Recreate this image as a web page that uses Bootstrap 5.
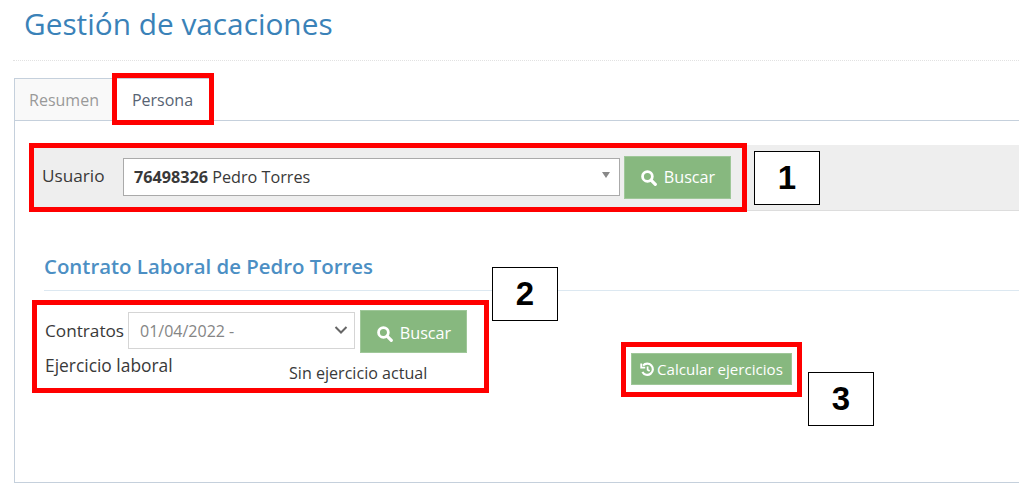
<!DOCTYPE html>
<html lang="es">
<head>
    <meta charset="UTF-8">
    <meta name="viewport" content="width=device-width, initial-scale=1.0">
    <title>Gestión de vacaciones</title>
    <link rel="stylesheet" href="https://cdn.jsdelivr.net/npm/bootstrap@5.3.0/dist/css/bootstrap.min.css">
    <style>
        html, body { height: 497px; overflow: hidden; }
        body { position: relative; font-family: "Open Sans", sans-serif; font-size: 16px; color: #393939; background: #fff; }
        .page-head { margin: 0 4px 0 13px; height: 61px; padding: 5px 0 0 11px; border-bottom: 1px dotted #e2e2e2; }
        .page-head h1 { font-size: 29.8px; line-height: 37px; font-weight: 400; color: #3a82b8; margin: 0; }
        .tab-area { margin: 17px 4px 0 14px; }
        .tab-strip { height: 43px; margin-bottom: -1px; position: relative; z-index: 1; }
        .tab-item { height: 43px; width: 100px; display: flex; align-items: center; justify-content: center; font-size: 16px; border: 1px solid #c5d0dc; }
        .tab-off { background: #f9f9f9; color: #999; border-right: 0; width: 99px; }
        .tab-on { background: #fff; color: #576373; border-bottom-color: #fff; padding-right: 1px; }
        .tab-body { height: 363px; border: 1px solid #c5d0dc; border-right: 0; padding: 24px 0 0 15px; }
        .user-bar { height: 66px; background: #eee; border-bottom: 1px solid #ddd; padding: 11px 0 0 12px; }
        .user-label { width: 81px; padding-top: 8px; font-size: 17.2px; line-height: 24px; }
        .user-select { width: 497px; height: 38px; margin-top: 2px; background: #fff; border: 1px solid #aaa; padding: 0 10px; font-size: 16.2px; position: relative; }
        .user-select::after { content: ""; position: absolute; right: 9px; top: 13px; border: 4px solid transparent; border-top: 6px solid #888; }
        .go-btn { background: #87b87f; border: 1px solid #9fc799; color: #fff; font-size: 16.2px; display: flex; align-items: center; justify-content: center; gap: 7px; border-radius: 0; }
        .go-btn.tall { width: 107px; height: 43px; }
        .go-btn.user-go { margin-left: 4px; }
        .go-btn svg { flex: none; }
        .section-head { margin: 39px 0 0 14px; height: 41px; border-bottom: 1px solid #dce8f1; font-size: 20.4px; line-height: 33px; font-weight: 600; color: #4c8fc4; }
        .form-zone { margin-left: 15px; }
        .form-left { width: 440px; padding-top: 19px; }
        .contract-label { width: 83px; font-size: 17.2px; padding-top: 9px; line-height: 24px; }
        .contract-select { width: 227px; height: 37px; margin-top: 2px; border: 1px solid #d5d5d5; background: #fff; color: #858585; padding: 0 11px; font-size: 16px; position: relative; line-height: 37px; }
        .contract-select svg { position: absolute; right: 6px; top: 12px; }
        .contract-go { margin-left: 5px; padding-top: 3px !important; }
        .year-row { line-height: 21px; }
        .year-label { width: 244px; margin-top: 2px; font-size: 17.4px; }
        .year-note { font-size: 16.1px; margin-top: 10px; }
        .calc-wrap { margin-left: 146px; padding-top: 62px; }
        .calc-btn { width: 161px; height: 32px; font-size: 15.1px; gap: 2px; }
        .red-frame { position: absolute; border: 5px solid #f00; pointer-events: none; z-index: 5; }
        .red-tab { left: 112px; top: 73px; width: 102px; height: 52px; }
        .red-user { left: 29px; top: 143px; width: 718px; height: 69px; }
        .red-contract { left: 32px; top: 300px; width: 457px; height: 93px; }
        .red-calc { left: 621px; top: 342px; width: 181px; height: 55px; }
        .num-box { position: absolute; width: 66px; height: 54px; background: #fff; border: 1px solid #000; color: #000; z-index: 6; font-family: "Liberation Sans", sans-serif; font-weight: 700; font-size: 33px; line-height: 52px; text-align: center; }
        .num-one { left: 754px; top: 151px; }
        .num-two { left: 492px; top: 267px; }
        .num-three { left: 808px; top: 372px; }
    </style>
</head>
<body>
    <div class="page-head">
        <h1>Gestión de vacaciones</h1>
    </div>

    <div class="tab-area">
        <div class="tab-strip d-flex">
            <div class="tab-item tab-off">Resumen</div>
            <div class="tab-item tab-on">Persona</div>
        </div>
        <div class="tab-body">
            <!-- Usuario -->
            <div class="user-bar d-flex align-items-start">
                <div class="user-label">Usuario</div>
                <div class="user-select d-flex align-items-center"><span><b class="fw-bold">76498326</b> Pedro Torres</span></div>
                <button type="button" class="btn go-btn tall user-go p-0">
                    <svg width="17" height="17" viewBox="0 0 16 16" fill="none" stroke="#fff"><circle cx="7" cy="7" r="4.6" stroke-width="2.6"/><path d="M10.4 10.4l4 4" stroke-width="3" stroke-linecap="round"/></svg>
                    Buscar
                </button>
            </div>

            <div class="section-head">Contrato Laboral de Pedro Torres</div>

            <div class="form-zone d-flex align-items-start">
                <div class="form-left">
                    <div class="d-flex align-items-start">
                        <div class="contract-label">Contratos</div>
                        <div class="contract-select">01/04/2022 -
                            <svg width="14" height="10" viewBox="0 0 14 10" fill="none" stroke="#666" stroke-width="2"><path d="M1.5 2l5.5 5.5L12.5 2"/></svg>
                        </div>
                        <button type="button" class="btn go-btn tall contract-go p-0">
                            <svg width="17" height="17" viewBox="0 0 16 16" fill="none" stroke="#fff"><circle cx="7" cy="7" r="4.6" stroke-width="2.6"/><path d="M10.4 10.4l4 4" stroke-width="3" stroke-linecap="round"/></svg>
                            Buscar
                        </button>
                    </div>
                    <div class="year-row d-flex align-items-start">
                        <div class="year-label">Ejercicio laboral</div>
                        <div class="year-note">Sin ejercicio actual</div>
                    </div>
                </div>
                <div class="calc-wrap">
                    <button type="button" class="btn go-btn calc-btn p-0">
                        <svg width="15" height="15" viewBox="0 0 15 15" fill="none" stroke="#fff" stroke-width="2.2"><path d="M3 3.6A5.6 5.6 0 1 1 2.4 10"/><path d="M1.2 1.6v4h4" stroke-width="1.8"/><path d="M7.6 4.4v3.4l2 1.2" stroke-width="1.7"/></svg>
                        Calcular ejercicios
                    </button>
                </div>
            </div>
        </div>
    </div>

    <!-- Marcas de la captura -->
    <div class="red-frame red-tab"></div>
    <div class="red-frame red-user"></div>
    <div class="red-frame red-contract"></div>
    <div class="red-frame red-calc"></div>
    <div class="num-box num-one">1</div>
    <div class="num-box num-two">2</div>
    <div class="num-box num-three">3</div>

    <script src="https://cdn.jsdelivr.net/npm/bootstrap@5.3.0/dist/js/bootstrap.bundle.min.js"></script>
</body>
</html>
